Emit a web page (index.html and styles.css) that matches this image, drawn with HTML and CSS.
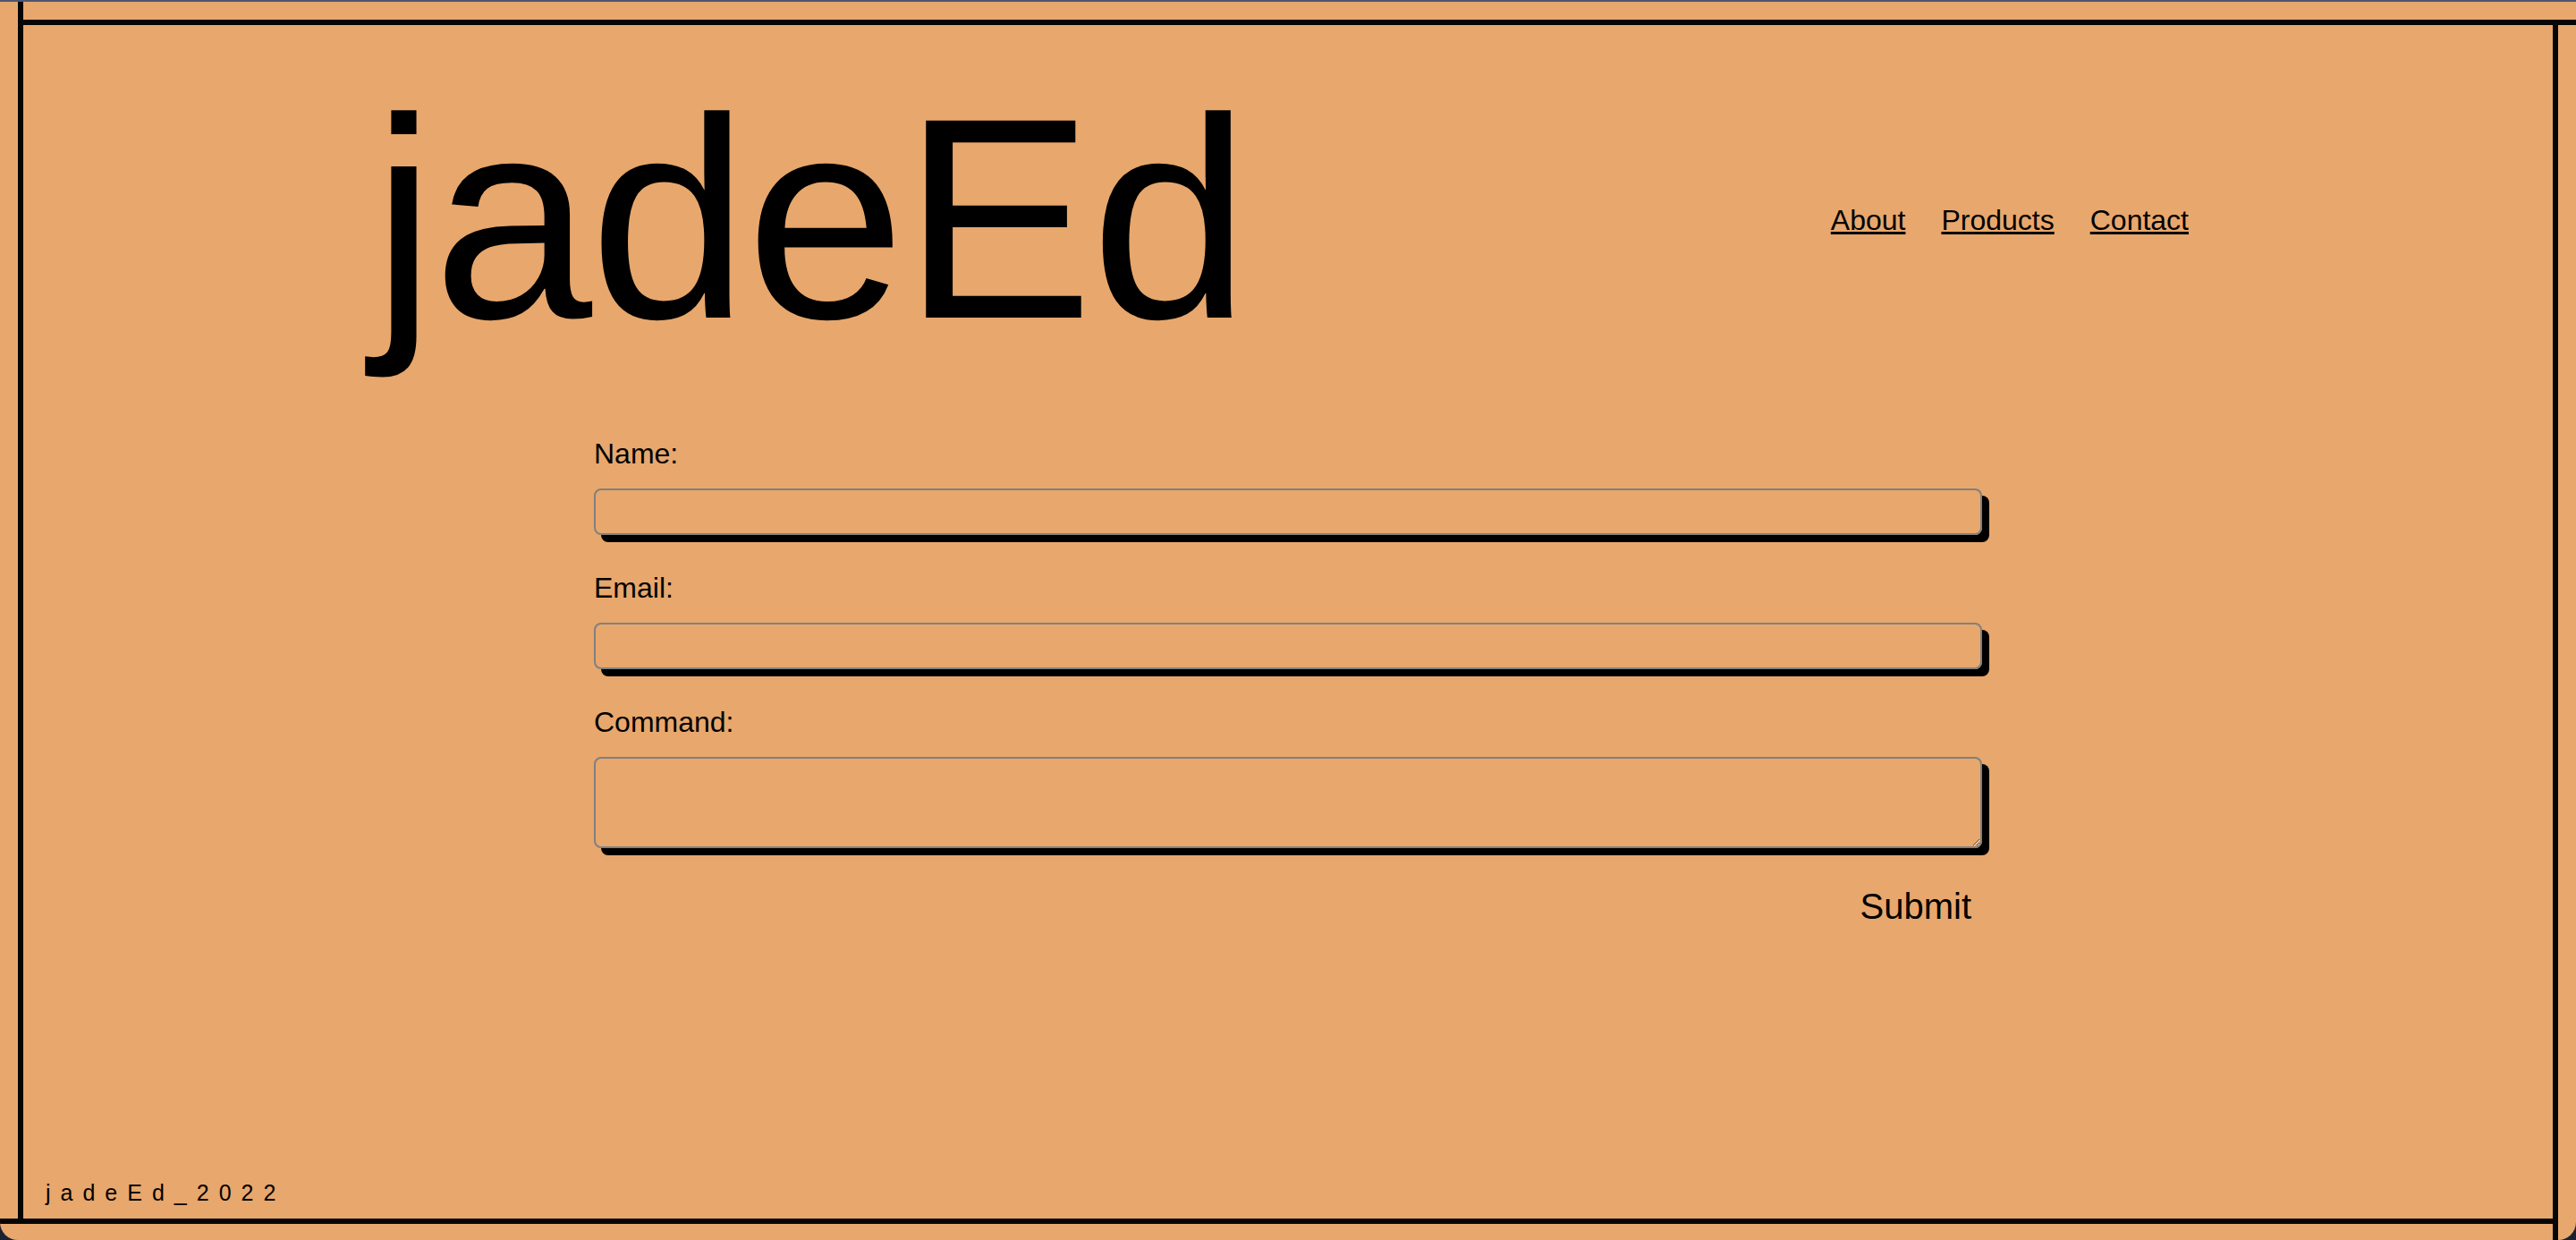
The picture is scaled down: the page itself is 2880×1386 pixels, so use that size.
FILE: index.html
```html
<!DOCTYPE html>
<html lang="en">
<head>
<meta charset="utf-8">
<title>jadeEd</title>
<link rel="stylesheet" href="styles.css">
</head>
<body class="page">
  <div class="frame-line line-left"></div>
  <div class="frame-line line-top"></div>
  <div class="frame-line line-right"></div>
  <div class="frame-line line-bottom"></div>

  <header class="site-header">
    <h1 class="logo">jadeEd</h1>
    <nav class="nav">
      <a href="#" class="nav-link">About</a>
      <a href="#" class="nav-link">Products</a>
      <a href="#" class="nav-link">Contact</a>
    </nav>
  </header>

  <main class="content">
    <form class="contact-form">
      <label class="field-label" for="name">Name:</label>
      <input class="field-input" id="name" type="text">
      <label class="field-label" for="email">Email:</label>
      <input class="field-input" id="email" type="email">
      <label class="field-label" for="command">Command:</label>
      <textarea class="field-input field-area" id="command"></textarea>
      <div class="actions">
        <button class="submit" type="button">Submit</button>
      </div>
    </form>
  </main>

  <footer class="site-footer">jadeEd_2022</footer>
</body>
</html>
```

FILE: styles.css
```css
html {
  margin: 0;
  background: #1c2131;
}

.page {
  position: relative;
  margin: 0;
  min-height: 100vh;
  box-sizing: border-box;
  border-top: 2px solid #4b5672;
  background: #e8a76c;
  border-radius: 0 0 20px 20px;
  display: flex;
  flex-direction: column;
  font-family: "Liberation Sans", Arial, sans-serif;
  color: #000;
}

.frame-line {
  position: absolute;
  background: #060606;
}

.line-left {
  left: 20px;
  top: 0;
  bottom: 18px;
  width: 6px;
}

.line-top {
  left: 20px;
  right: 0;
  top: 20px;
  height: 6px;
}

.line-right {
  right: 20px;
  top: 20px;
  bottom: 0;
  width: 6px;
}

.line-bottom {
  left: 0;
  right: 20px;
  bottom: 18px;
  height: 6px;
}

.site-header {
  display: flex;
  align-items: center;
  justify-content: space-between;
  padding: 82px 433px 0 416px;
}

.logo {
  margin: 0;
  font-size: 320px;
  line-height: 320px;
  font-weight: 400;
  letter-spacing: -3px;
}

.nav {
  display: flex;
  gap: 40px;
  padding-top: 4px;
}

.nav-link {
  font-size: 32px;
  line-height: 36px;
  color: #000;
  text-decoration: underline;
}

.content {
  display: flex;
  justify-content: center;
  padding-top: 85px;
}

.contact-form {
  width: 1552px;
  display: flex;
  flex-direction: column;
}

.field-label {
  display: block;
  font-size: 32px;
  line-height: 36px;
  margin-top: 41px;
}

.field-label:first-child {
  margin-top: 0;
}

.field-input {
  display: block;
  box-sizing: border-box;
  width: 100%;
  height: 52px;
  margin: 21px 0 0;
  border: 2px solid #808080;
  border-radius: 8px;
  background: transparent;
  box-shadow: 8px 8px 0 #000;
  font-family: "Liberation Sans", Arial, sans-serif;
  font-size: 24px;
  padding: 4px 10px;
  outline: none;
}

.field-area {
  height: 102px;
}

.actions {
  display: flex;
  justify-content: flex-end;
  margin-top: 43px;
}

.submit {
  background: none;
  border: none;
  padding: 0 12px;
  margin: 0;
  font-family: "Liberation Sans", Arial, sans-serif;
  font-size: 40px;
  line-height: normal;
  color: #000;
  cursor: pointer;
}

.site-footer {
  margin-top: auto;
  padding: 0 0 38px 51px;
  font-size: 25px;
  line-height: 29px;
  letter-spacing: 11px;
}
```
